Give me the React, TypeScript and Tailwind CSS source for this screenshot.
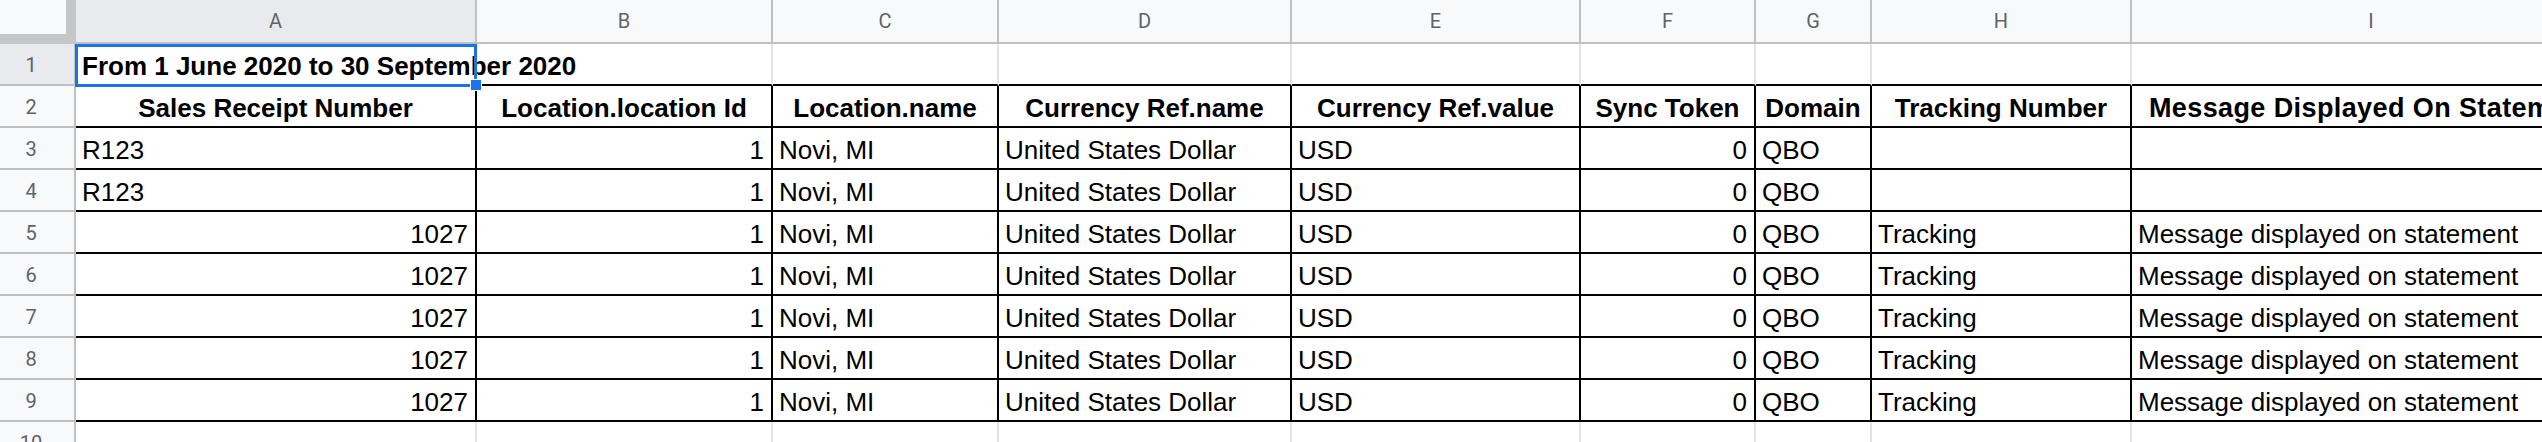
import React from "react";

const letters = ["A", "B", "C", "D", "E", "F", "G", "H", "I"];

const headers = [
  "Sales Receipt Number",
  "Location.location Id",
  "Location.name",
  "Currency Ref.name",
  "Currency Ref.value",
  "Sync Token",
  "Domain",
  "Tracking Number",
  "Message Displayed On Statement",
];

type Cell = { v: string; right?: boolean };

const receipt = (id: string, numeric: boolean, full: boolean): Cell[] => [
  { v: id, right: numeric },
  { v: "1", right: true },
  { v: "Novi, MI" },
  { v: "United States Dollar" },
  { v: "USD" },
  { v: "0", right: true },
  { v: "QBO" },
  { v: full ? "Tracking" : "" },
  { v: full ? "Message displayed on statement" : "" },
];

const rows: Cell[][] = [
  receipt("R123", false, false),
  receipt("R123", false, false),
  receipt("1027", true, true),
  receipt("1027", true, true),
  receipt("1027", true, true),
  receipt("1027", true, true),
  receipt("1027", true, true),
];

const font = "font-['Liberation_Sans',Arial,sans-serif]";

const RowHead = ({ n, active }: { n: number; active?: boolean }) => (
  <div
    className={`flex h-[42px] items-center justify-center border-r-2 border-b-2 border-[#c0c0c0] pr-[12px] pt-[2px] font-['Roboto',sans-serif] text-[20px] text-[#5f6368] ${
      active ? "bg-[#e8eaed]" : "bg-[#f8f9fa]"
    }`}
  >
    {n}
  </div>
);

export default function App() {
  return (
    <div className="relative h-[442px] w-[2542px] overflow-hidden bg-white">
      <div
        className={`grid w-[2612px] grid-cols-[76px_401px_296px_226px_293px_289px_175px_116px_260px_480px] ${font} text-[26px] text-black`}
      >
        {/* corner */}
        <div className="flex h-[44px] bg-[#c4c7c5]">
          <div className="h-[34px] w-[66px] bg-[#f8f9fa]" />
        </div>
        {letters.map((l, i) => (
          <div
            key={l}
            className={`flex h-[44px] items-center justify-center border-r-2 border-b-2 border-[#c0c0c0] font-['Roboto',sans-serif] text-[20px] text-[#5f6368] ${
              i === 0 ? "bg-[#e8eaed]" : "bg-[#f8f9fa]"
            }`}
          >
            {l}
          </div>
        ))}

        {/* row 1 */}
        <RowHead n={1} active />
        <div className="flex h-[42px] items-center border-r-2 border-b-2 border-r-[#e2e3e3] border-b-black pt-[3px] pl-[6px] font-bold whitespace-nowrap leading-[26px]">
          From 1 June 2020 to 30 September 2020
        </div>
        {letters.slice(1).map((l) => (
          <div key={l} className="h-[42px] border-r-2 border-b-2 border-r-[#e2e3e3] border-b-black" />
        ))}

        {/* row 2 */}
        <RowHead n={2} />
        {headers.map((h, i) => (
          <div
            key={h}
            className={`flex h-[42px] items-center justify-center overflow-hidden border-r-2 border-b-2 border-black pt-[3px] font-bold whitespace-nowrap leading-[26px] ${
              i === 8 ? "px-0 text-[27px] tracking-[0.4px]" : "px-[6px]"
            }`}
          >
            {h}
          </div>
        ))}

        {rows.map((r, ri) => (
          <React.Fragment key={ri}>
            <RowHead n={ri + 3} />
            {r.map((c, ci) => (
              <div
                key={ci}
                className={`flex h-[42px] items-center overflow-hidden border-r-2 border-b-2 border-black pt-[3px] whitespace-nowrap leading-[26px] ${
                  c.right ? "justify-end pr-[7px]" : "pl-[6px]"
                }`}
              >
                {c.v}
              </div>
            ))}
          </React.Fragment>
        ))}

        {/* row 10 */}
        <RowHead n={10} />
        {letters.map((l) => (
          <div key={l} className="h-[42px] border-r-2 border-b-2 border-[#e2e3e3]" />
        ))}
      </div>

      {/* selection on A1 */}
      <div className="absolute top-[44px] left-[75px] h-[43px] w-[402px] border-[3px] border-[#1a73e8]" />
      <div className="absolute top-[79px] left-[470px] h-[12px] w-[12px] border border-white bg-[#1a73e8]" />
    </div>
  );
}
